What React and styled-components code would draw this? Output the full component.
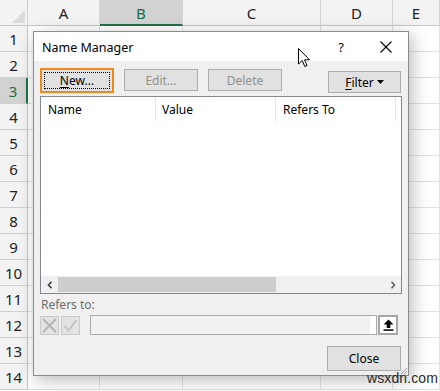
import React from "react";
import styled, { createGlobalStyle } from "styled-components";

const Global = createGlobalStyle`
  html, body { margin: 0; padding: 0; background: #fff; overflow: hidden; }
  body { font-family: "Noto Sans", "Open Sans", sans-serif; }
`;

const Page = styled.div`
  position: relative;
  width: 440px;
  height: 391px;
  overflow: hidden;
`;

const Sheet = styled.div`
  display: grid;
  grid-template-columns: 28px 72px 83px 138px 72px 47px;
  grid-template-rows: 26px repeat(14, 26px);
  font-family: "Noto Sans", "Open Sans", sans-serif;
  font-size: 15px;
  color: #222;
`;

const Corner = styled.div`
  background: #f3f3f3;
  border-right: 1px solid #d0d0d0;
  border-bottom: 1px solid #c6c6c6;
  position: relative;
  &::after {
    content: "";
    position: absolute;
    right: 2px;
    bottom: 2px;
    border-style: solid;
    border-width: 0 0 13px 13px;
    border-color: transparent transparent #dadada transparent;
  }
`;

const ColHead = styled.div`
  background: ${(p) => (p.$sel ? "#d2d2d2" : "#f3f3f3")};
  color: ${(p) => (p.$sel ? "#1e6b3f" : "#222")};
  border-right: 1px solid #d5d5d5;
  border-bottom: ${(p) => (p.$sel ? "2px solid #217346" : "1px solid #c6c6c6")};
  display: flex;
  align-items: center;
  justify-content: center;
  padding-top: 1px;
`;

const RowHead = styled.div`
  background: ${(p) => (p.$sel ? "#d2d2d2" : "#f3f3f3")};
  color: ${(p) => (p.$sel ? "#1e6b3f" : "#222")};
  border-right: ${(p) => (p.$sel ? "2px solid #217346" : "1px solid #c6c6c6")};
  border-bottom: 1px solid #d0d0d0;
  display: flex;
  align-items: flex-end;
  justify-content: center;
  padding-bottom: 2px;
  box-sizing: border-box;
`;

const Cell = styled.div`
  border-right: 1px solid #e1e1e1;
  border-bottom: 1px solid #e1e1e1;
`;

const Dialog = styled.div`
  position: absolute;
  left: 33px;
  top: 31px;
  width: 374px;
  height: 343px;
  border: 1px solid #8c8c8c;
  background: #f0f0f0;
  box-shadow: 3px 4px 16px rgba(0, 0, 0, 0.28);
  display: flex;
  flex-direction: column;
  font-family: "Noto Sans", "Open Sans", sans-serif;
  font-size: 12px;
  color: #000;
`;

const TitleBar = styled.div`
  height: 28px;
  background: #fff;
  display: flex;
  align-items: center;
  padding-left: 8px;
  padding-top: 1px;
`;

const Title = styled.div`
  flex: 1;
  font-size: 12.5px;
`;

const TitleBtn = styled.div`
  width: ${(p) => p.$w}px;
  margin-right: ${(p) => p.$mr || 0}px;
  display: flex;
  justify-content: center;
  align-items: center;
  font-size: 13px;
`;

const Body = styled.div`
  flex: 1;
  display: flex;
  flex-direction: column;
  padding: 6px 5px 0 6px;
  position: relative;
`;

const ButtonRow = styled.div`
  display: flex;
  align-items: center;
  height: 26px;
  gap: 10px;
`;

const Btn = styled.div`
  box-sizing: border-box;
  width: ${(p) => p.$w || 74}px;
  height: ${(p) => p.$h || 22}px;
  background: #e1e1e1;
  border: ${(p) => (p.$focus ? "2px solid #f0891c" : "1px solid #adadad")};
  color: ${(p) => (p.$disabled ? "#8f8f8f" : "#000")};
  display: flex;
  align-items: center;
  justify-content: center;
  margin-top: ${(p) => p.$mt || 0}px;
  margin-right: ${(p) => p.$mr || 0}px;
  position: relative;
  u { text-decoration: underline; text-underline-offset: 2px; }
`;

const FocusRect = styled.div`
  position: absolute;
  inset: 2px;
  border: 1px dotted #000;
  display: flex;
  align-items: center;
  justify-content: center;
`;

const Spacer = styled.div`
  flex: 1;
`;

const ListBox = styled.div`
  margin-top: 3px;
  width: 362px;
  height: 198px;
  box-sizing: border-box;
  border: 1px solid #828790;
  background: #fff;
  display: flex;
  flex-direction: column;
`;

const ListHead = styled.div`
  display: grid;
  grid-template-columns: 115px 120px 120px 1fr;
  height: 24px;
`;

const HeadCell = styled.div`
  border-right: ${(p) => (p.$last ? "none" : "1px solid #e5e5e5")};
  display: flex;
  align-items: center;
  padding-left: ${(p) => p.$pl || 7}px;
`;

const ListArea = styled.div`
  flex: 1;
`;

const HScroll = styled.div`
  height: 17px;
  background: #f0f0f0;
  display: flex;
  align-items: center;
`;

const Arrow = styled.div`
  width: 17px;
  height: 17px;
  display: flex;
  align-items: center;
  justify-content: center;
`;

const Thumb = styled.div`
  width: 218px;
  height: 15px;
  background: #cdcdcd;
`;

const Label = styled.div`
  margin-top: 3px;
  height: 16px;
  line-height: 16px;
  color: #6d6d6d;
  padding-left: 1px;
`;

const RefRow = styled.div`
  margin-top: 2px;
  display: flex;
  align-items: center;
  height: 20px;
`;

const IconBtn = styled.div`
  width: 19px;
  height: 19px;
  box-sizing: border-box;
  border: 1px solid #c9c9c9;
  background: #e3e3e3;
  display: flex;
  align-items: center;
  justify-content: center;
  margin-right: 2px;
`;

const RefInput = styled.div`
  margin-left: 8px;
  width: 287px;
  height: 20px;
  box-sizing: border-box;
  border: 1px solid #ababab;
  background: linear-gradient(to right, #f0f0f0 0 98%, #fff 98%);
`;

const Upload = styled.div`
  margin-left: 1px;
  width: 20px;
  height: 20px;
  box-sizing: border-box;
  border: 2px solid #a6a6a6;
  background: #fff;
  display: flex;
  align-items: center;
  justify-content: center;
`;

const Footer = styled.div`
  margin-top: 11px;
  display: flex;
  justify-content: flex-end;
  padding-right: 2px;
`;

const Grip = styled.svg`
  position: absolute;
  right: 0;
  bottom: 0;
`;

const Cursor = styled.svg`
  position: absolute;
  left: 298px;
  top: 48px;
`;

const Watermark = styled.div`
  position: absolute;
  left: 367px;
  top: 370px;
  font-family: "Liberation Sans", Arial, sans-serif;
  font-size: 14px;
  color: #2b2b2b;
  letter-spacing: 0.1px;
`;

const cols = ["A", "B", "C", "D", "E"];

export default function App() {
  const rows = Array.from({ length: 14 }, (_, i) => i + 1);
  return (
    <Page>
      <Global />
      <Sheet>
        <Corner />
        {cols.map((c) => (
          <ColHead key={c} $sel={c === "B"}>
            {c}
          </ColHead>
        ))}
        {rows.map((r) => (
          <React.Fragment key={r}>
            <RowHead $sel={r === 3}>{r}</RowHead>
            {cols.map((c) => (
              <Cell key={c} />
            ))}
          </React.Fragment>
        ))}
      </Sheet>

      <Dialog>
        <TitleBar>
          <Title>Name Manager</Title>
          <TitleBtn $w={16} $mr={15}>?</TitleBtn>
          <TitleBtn $w={44}>
            <svg width="12" height="12" viewBox="0 0 12 12">
              <path d="M0.5 0.5 L11.5 11.5 M11.5 0.5 L0.5 11.5" stroke="#000" strokeWidth="1.1" />
            </svg>
          </TitleBtn>
        </TitleBar>
        <Body>
          <ButtonRow>
            <Btn $focus $h={25}>
              <FocusRect>
                <span>
                  <u>N</u>ew...
                </span>
              </FocusRect>
            </Btn>
            <Btn $disabled>Edit...</Btn>
            <Btn $disabled>Delete</Btn>
            <Spacer />
            <Btn $w={73} $h={22} $mt={4} $mr={2}>
              <span>
                <u>F</u>ilter
              </span>
              <svg width="7" height="4" viewBox="0 0 7 4" style={{ marginLeft: 3 }}>
                <path d="M0 0 L7 0 L3.5 4 Z" fill="#000" />
              </svg>
            </Btn>
          </ButtonRow>
          <ListBox>
            <ListHead>
              <HeadCell>Name</HeadCell>
              <HeadCell $pl={6}>Value</HeadCell>
              <HeadCell>Refers To</HeadCell>
              <HeadCell $last />
            </ListHead>
            <ListArea />
            <HScroll>
              <Arrow>
                <svg width="6" height="8" viewBox="0 0 6 8">
                  <path d="M4.5 0.8 L1.5 4 L4.5 7.2" stroke="#404040" strokeWidth="1.6" fill="none" />
                </svg>
              </Arrow>
              <Thumb />
              <Spacer />
              <Arrow>
                <svg width="6" height="8" viewBox="0 0 6 8">
                  <path d="M1.5 0.8 L4.5 4 L1.5 7.2" stroke="#606060" strokeWidth="1.6" fill="none" />
                </svg>
              </Arrow>
            </HScroll>
          </ListBox>
          <Label>Refers to:</Label>
          <RefRow>
            <IconBtn>
              <svg width="15" height="15" viewBox="0 0 15 15">
                <path d="M1 1 L14 14 M14 1 L1 14" stroke="#b5b5b5" strokeWidth="2" />
              </svg>
            </IconBtn>
            <IconBtn>
              <svg width="15" height="15" viewBox="0 0 15 15">
                <path d="M1.5 8 L5.5 12.5 L13.5 2" stroke="#c2c2c2" strokeWidth="1.8" fill="none" />
              </svg>
            </IconBtn>
            <RefInput />
            <Upload>
              <svg width="11" height="12" viewBox="0 0 11 12">
                <path d="M5.5 0.5 L10.5 5.5 L7.3 5.5 L7.3 9 L3.7 9 L3.7 5.5 L0.5 5.5 Z" fill="#000" />
                <rect x="0.5" y="10.3" width="10" height="1.5" fill="#000" />
              </svg>
            </Upload>
          </RefRow>
          <Footer>
            <Btn $w={74} $h={25}>Close</Btn>
          </Footer>
          <Grip width="9" height="9" viewBox="0 0 9 9">
            <path d="M8 2 L2 8 M8 5 L5 8" stroke="#a0a0a0" strokeWidth="1" />
          </Grip>
        </Body>
      </Dialog>

      <Cursor width="14" height="20" viewBox="0 0 14 20">
        <path
          d="M0.5 0.5 L0.5 16 L4.2 12.5 L6.8 18.5 L9 17.5 L6.5 11.8 L11.5 11.8 Z"
          fill="#fff"
          stroke="#000"
          strokeWidth="1"
          strokeLinejoin="round"
        />
      </Cursor>
      <Watermark>wsxdn.com</Watermark>
    </Page>
  );
}
